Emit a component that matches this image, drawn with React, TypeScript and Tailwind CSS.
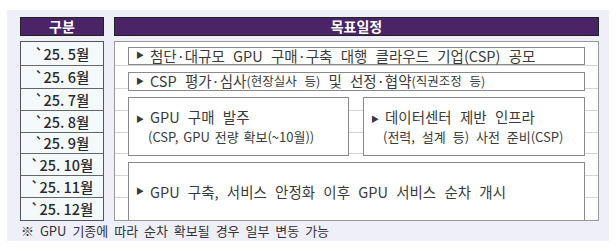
import React from "react";

const rows = ["`25. 5월", "`25. 6월", "`25. 7월", "`25. 8월", "`25. 9월", "`25. 10월", "`25. 11월", "`25. 12월"];
const heights = ["h-[24px]", "h-[23px]", "h-[22px]", "h-[22px]", "h-[21px]", "h-[22px]", "h-[22px]", "h-[22px]"];

const Tri = () => <span className="text-[8px] mr-[6px] relative top-[-1px] [word-spacing:0]">▶</span>;

export default function App() {
  return (
    <div className="w-[616px] h-[249px] bg-white pt-[10px] pl-[7px]" style={{ fontFamily: '"Noto Sans CJK KR", "Noto Sans", sans-serif' }}>
      <div className="w-[602px] h-[231px] bg-[#efeffa] pt-[7px] pl-[13px] pr-[10px]">
        <div className="flex gap-[10px]">
          <div className="w-[84px] flex flex-col">
            <div className="h-[19px] bg-[#4b2468] border border-[#222] text-white font-bold text-[14px] leading-[17px] flex items-center justify-center">구분</div>
            <div className="mt-[5px] border border-[#555] bg-[#f4f9fc]">
              {rows.map((r, i) => (
                <div key={i} className={`${heights[i]} flex items-center justify-center text-[14.5px] font-medium text-[#2a2a2a] ${i < 7 ? "border-b border-[#666]" : ""}`}>
                  {r}
                </div>
              ))}
            </div>
          </div>
          <div className="w-[485px] flex flex-col">
            <div className="h-[19px] bg-[#4b2468] border border-[#222] text-white font-bold text-[14px] leading-[17px] flex items-center justify-center">목표일정</div>
            <div className="mt-[5px] border border-[#999] bg-white grid h-[180px]">
              <div className="[grid-area:1/1] flex flex-col">
                {heights.map((h, i) => (
                  <div key={i} className={`${h} ${i < 7 ? "border-b border-[#d4d4d4]" : ""}`} />
                ))}
              </div>
              <div className="[grid-area:1/1] flex flex-col px-[13px] pt-[5px] text-[#3a3a3a] text-[14.5px] [word-spacing:5px]">
                <div className="h-[18px] bg-white border border-[#8a8a8a] flex items-center pl-[7px] leading-none whitespace-pre">
                  <Tri />첨단·대규모 GPU 구매·구축 대행 클라우드 기업(CSP) 공모
                </div>
                <div className="mt-[7px] h-[19px] bg-white border border-[#8a8a8a] flex items-center pl-[7px] leading-none whitespace-pre">
                  <Tri />CSP 평가·심사<span className="text-[12.5px]">(현장실사 등)</span> 및 선정·협약<span className="text-[12.5px]">(직권조정 등)</span>
                </div>
                <div className="mt-[6px] flex gap-[14px]">
                  <div className="w-[221px] h-[59px] bg-white border border-[#8a8a8a] flex flex-col justify-center pl-[7px]">
                    <div className="leading-[18px] whitespace-pre"><Tri />GPU 구매 발주</div>
                    <div className="text-[13px] leading-[16px] pl-[12px] [word-spacing:2px] whitespace-pre">(CSP, GPU 전량 확보(~10월))</div>
                  </div>
                  <div className="w-[222px] h-[59px] bg-white border border-[#8a8a8a] flex flex-col justify-center pl-[7px]">
                    <div className="leading-[18px] whitespace-pre"><Tri />데이터센터 제반 인프라</div>
                    <div className="text-[13px] leading-[16px] pl-[12px] [word-spacing:4px] whitespace-pre">(전력, 설계 등) 사전 준비(CSP)</div>
                  </div>
                </div>
                <div className="mt-[6px] flex-1 bg-white border border-[#8a8a8a] border-b-0 flex items-center pl-[7px] whitespace-pre">
                  <Tri />GPU 구축, 서비스 안정화 이후 GPU 서비스 순차 개시
                </div>
              </div>
            </div>
          </div>
        </div>
        <div className="mt-[0px] text-[13px] leading-[20px] text-[#333] pl-[1px] [word-spacing:3px]">※ GPU 기종에 따라 순차 확보될 경우 일부 변동 가능</div>
      </div>
    </div>
  );
}
